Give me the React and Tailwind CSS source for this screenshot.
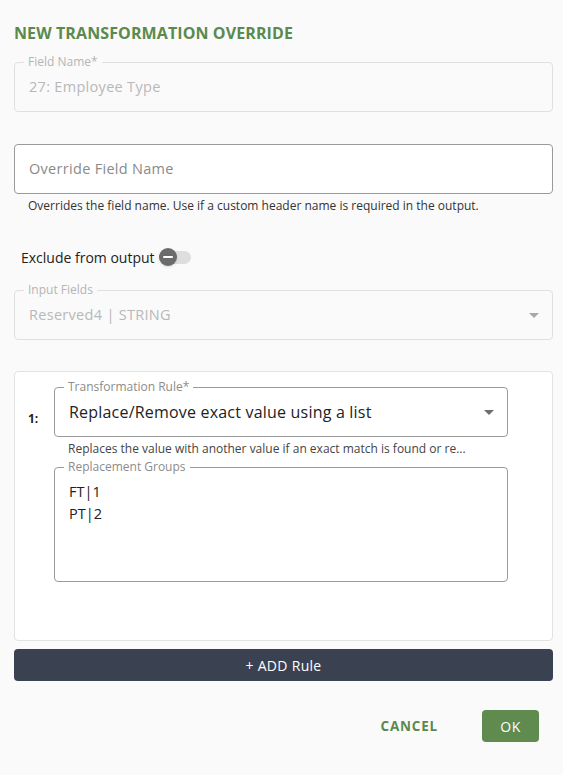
import React from 'react';

const FONT = { fontFamily: '"Open Sans", "Liberation Sans", sans-serif' };

// Outlined text field with a notched label
const OutlinedBox = ({ label, labelBg = 'bg-[#fafafa]', className = '', labelClass = 'text-[#b5b5b5]', children }) => (
  <div className={`relative border rounded ${className}`}>
    {label && (
      <span className={`absolute top-[-9px] left-[9px] px-[4px] text-[12px] leading-[15px] ${labelBg} ${labelClass}`}>
        {label}
      </span>
    )}
    {children}
  </div>
);

const Caret = ({ color = '#9e9e9e' }) => (
  <svg width="10" height="5" viewBox="0 0 10 5">
    <path d="M0 0 L10 0 L5 5 Z" fill={color} />
  </svg>
);

export default function App() {
  return (
    <div className="min-h-screen bg-[#fafafa] pl-[14px] pr-[10px] pt-[23px] pb-8 text-[#222]" style={FONT}>
      <h2 className="text-[16px] leading-[20px] font-bold text-[#5b8a4c] tracking-[0.1px]">
        NEW TRANSFORMATION OVERRIDE
      </h2>

      <OutlinedBox label="Field Name*" className="mt-[19px] h-[50px] border-[#e0e0e0] flex items-center px-[14px]">
        <span className="text-[14.5px] text-[#b8b8b8] tracking-[0.3px]">27: Employee Type</span>
      </OutlinedBox>

      <div className="mt-[32px] h-[50px] border border-[#9a9a9a] rounded bg-white flex items-center px-[14px]">
        <span className="text-[14.5px] text-[#8a8a8a] tracking-[0.3px]">Override Field Name</span>
      </div>
      <p className="mt-[4px] pl-[14px] text-[12px] leading-[15px] text-[#333]">
        Overrides the field name. Use if a custom header name is required in the output.
      </p>

      <div className="mt-[34px] h-[20px] flex items-center pl-[7px]">
        <span className="text-[14px] text-[#222]">Exclude from output</span>
        <div className="ml-[4px] relative w-[34px] h-[20px] flex items-center">
          <div className="w-[32px] h-[13px] rounded-full bg-[#dedede]"></div>
          <div className="absolute left-0 top-[1px] w-[18px] h-[18px] rounded-full bg-[#6b6b6b] flex items-center justify-center shadow">
            <div className="w-[10px] h-[2px] bg-white rounded"></div>
          </div>
        </div>
      </div>

      <OutlinedBox label="Input Fields" className="mt-[23px] h-[50px] border-[#e0e0e0] flex items-center justify-between pl-[14px] pr-[13px]">
        <span className="text-[14.5px] text-[#b8b8b8] tracking-[0.3px]">Reserved4 | STRING</span>
        <Caret color="#a8a8a8" />
      </OutlinedBox>

      <div className="mt-[31px] h-[270px] bg-white border border-[#e2e2e2] rounded pt-[15px] pl-[13px]">
        <div className="flex">
          <div className="w-[26px] h-[50px] flex items-center pt-[14px]">
            <span className="text-[12px] font-bold text-[#222]">1:</span>
          </div>
          <div className="w-[454px]">
            <OutlinedBox label="Transformation Rule*" labelBg="bg-white" labelClass="text-[#8c8c8c]" className="h-[50px] border-[#9a9a9a] flex items-center justify-between pl-[14px] pr-[13px]">
              <span className="text-[16px] text-[#222] tracking-[0.2px]">Replace/Remove exact value using a list</span>
              <Caret color="#6e6e6e" />
            </OutlinedBox>
            <p className="mt-[4px] pl-[14px] text-[12px] leading-[15px] text-[#444] truncate">
              Replaces the value with another value if an exact match is found or re...
            </p>
            <OutlinedBox label="Replacement Groups" labelBg="bg-white" labelClass="text-[#8c8c8c]" className="mt-[11px] h-[115px] border-[#9a9a9a] pl-[14px] pt-[13px]">
              <div className="text-[14.5px] leading-[22px] text-[#222]">FT|1</div>
              <div className="text-[14.5px] leading-[22px] text-[#222]">PT|2</div>
            </OutlinedBox>
          </div>
        </div>
      </div>

      <button className="mt-[8px] w-full h-[32px] rounded bg-[#3a4252] text-white text-[14px] tracking-[0.3px] flex items-center justify-center">
        + ADD Rule
      </button>

      <div className="mt-[29px] flex justify-end items-center pr-[14px]">
        <button className="h-[32px] px-[16px] text-[13.5px] font-bold text-[#5b8a4c] tracking-[0.8px]">CANCEL</button>
        <button className="ml-[28px] h-[32px] w-[57px] rounded bg-[#5f8b4f] text-white text-[14px] tracking-[0.5px]">OK</button>
      </div>
    </div>
  );
}
